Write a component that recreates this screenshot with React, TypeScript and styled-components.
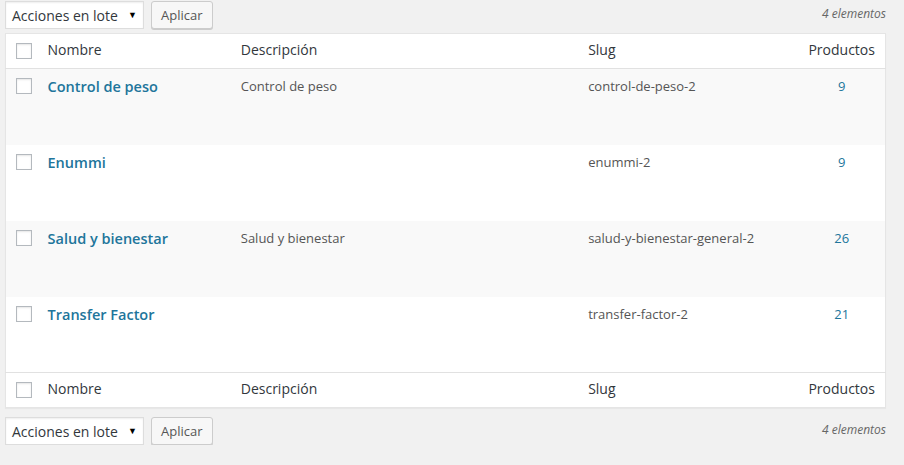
import styled, { createGlobalStyle } from "styled-components";

const GlobalStyle = createGlobalStyle`
  html, body {
    margin: 0;
    padding: 0;
    background: #f1f1f1;
  }
  body {
    font-family: "Open Sans", "Noto Sans", sans-serif;
    color: #444;
  }
`;

interface Term {
  name: string;
  description: string;
  slug: string;
  count: number;
}

const terms: Term[] = [
  { name: "Control de peso", description: "Control de peso", slug: "control-de-peso-2", count: 9 },
  { name: "Enummi", description: "", slug: "enummi-2", count: 9 },
  { name: "Salud y bienestar", description: "Salud y bienestar", slug: "salud-y-bienestar-general-2", count: 26 },
  { name: "Transfer Factor", description: "", slug: "transfer-factor-2", count: 21 },
];

const Page = styled.div`
  padding: 1px 18px 0 5px;
`;

const TableNav = styled.div<{ $bottom?: boolean }>`
  display: flex;
  align-items: center;
  gap: 7px;
  height: 28px;
  margin: ${p => (p.$bottom ? "9px 0 0" : "0 0 4px")};
`;

const Select = styled.div`
  display: flex;
  align-items: center;
  justify-content: space-between;
  box-sizing: border-box;
  width: 139px;
  height: 28px;
  padding: 0 6px 0 6px;
  background: #fff;
  border: 1px solid #ddd;
  box-shadow: inset 0 1px 2px rgba(0, 0, 0, 0.07);
  font-size: 14px;
  color: #32373c;
`;

const Arrow = styled.span`
  font-size: 9px;
  color: #000;
  margin-top: -2px;
`;

const Button = styled.button`
  box-sizing: border-box;
  height: 28px;
  padding: 0 9px;
  background: #f7f7f7;
  border: 1px solid #ccc;
  border-radius: 3px;
  box-shadow: 0 1px 0 #ccc;
  font-family: inherit;
  font-size: 13px;
  color: #555;
`;

const Count = styled.span`
  margin-left: auto;
  align-self: flex-start;
  padding-top: 4px;
  font-size: 12px;
  font-style: italic;
  color: #666;
`;

const Table = styled.table`
  width: 100%;
  border-collapse: collapse;
  border-spacing: 0;
  background: #fff;
  border: 1px solid #e5e5e5;
  box-shadow: 0 1px 1px rgba(0, 0, 0, 0.04);
  table-layout: fixed;
`;

const HeadCell = styled.th<{ $center?: boolean }>`
  box-sizing: border-box;
  height: 35px;
  padding: 0 10px 3px;
  text-align: ${p => (p.$center ? "center" : "left")};
  font-weight: 400;
  font-size: 14px;
  color: #32373c;
  vertical-align: middle;
`;

const HeadRow = styled.tr<{ $foot?: boolean }>`
  ${p => (p.$foot ? "border-top: 1px solid #e1e1e1;" : "border-bottom: 1px solid #e1e1e1;")}
`;

const CheckCell = styled.td`
  padding: 0 0 0 10px;
  vertical-align: middle;
`;

const BodyCheckCell = styled(CheckCell)`
  vertical-align: top;
  padding-top: 9px;
`;

const Checkbox = styled.span`
  display: block;
  box-sizing: border-box;
  width: 16px;
  height: 16px;
  background: #fff;
  border: 1px solid #b4b9be;
  box-shadow: inset 0 1px 2px rgba(0, 0, 0, 0.1);
`;

const Row = styled.tr<{ $alt?: boolean }>`
  background: ${p => (p.$alt ? "#f9f9f9" : "#fff")};
  height: 76px;
`;

const Cell = styled.td<{ $center?: boolean }>`
  padding: 8px 10px;
  vertical-align: top;
  font-size: 13px;
  line-height: 19px;
  color: #555;
  text-align: ${p => (p.$center ? "center" : "left")};
`;

const NameLink = styled.a`
  display: block;
  font-size: 14.5px;
  font-weight: 600;
  line-height: 20px;
  color: #21759b;
  text-decoration: none;
`;

const CountLink = styled.a`
  color: #21759b;
  text-decoration: none;
`;

const Nav = ({ bottom }: { bottom?: boolean }) => (
  <TableNav $bottom={bottom}>
    <Select>
      Acciones en lote <Arrow>▼</Arrow>
    </Select>
    <Button>Aplicar</Button>
    <Count>4 elementos</Count>
  </TableNav>
);

const Header = ({ foot }: { foot?: boolean }) => (
  <HeadRow $foot={foot}>
    <CheckCell as="th">
      <Checkbox />
    </CheckCell>
    <HeadCell>Nombre</HeadCell>
    <HeadCell>Descripción</HeadCell>
    <HeadCell>Slug</HeadCell>
    <HeadCell $center>Productos</HeadCell>
  </HeadRow>
);

const App = () => {
  return (
    <Page>
      <GlobalStyle />
      <Nav />
      <Table>
        <colgroup>
          <col style={{ width: 32 }} />
          <col style={{ width: 193 }} />
          <col style={{ width: 347 }} />
          <col style={{ width: 220 }} />
          <col style={{ width: 87 }} />
        </colgroup>
        <thead>
          <Header />
        </thead>
        <tbody>
          {terms.map((t, i) => (
            <Row key={t.slug} $alt={i % 2 === 0}>
              <BodyCheckCell>
                <Checkbox />
              </BodyCheckCell>
              <Cell>
                <NameLink href="#">{t.name}</NameLink>
              </Cell>
              <Cell>{t.description}</Cell>
              <Cell>{t.slug}</Cell>
              <Cell $center>
                <CountLink href="#">{t.count}</CountLink>
              </Cell>
            </Row>
          ))}
        </tbody>
        <tfoot>
          <Header foot />
        </tfoot>
      </Table>
      <Nav bottom />
    </Page>
  );
};

export default App;
